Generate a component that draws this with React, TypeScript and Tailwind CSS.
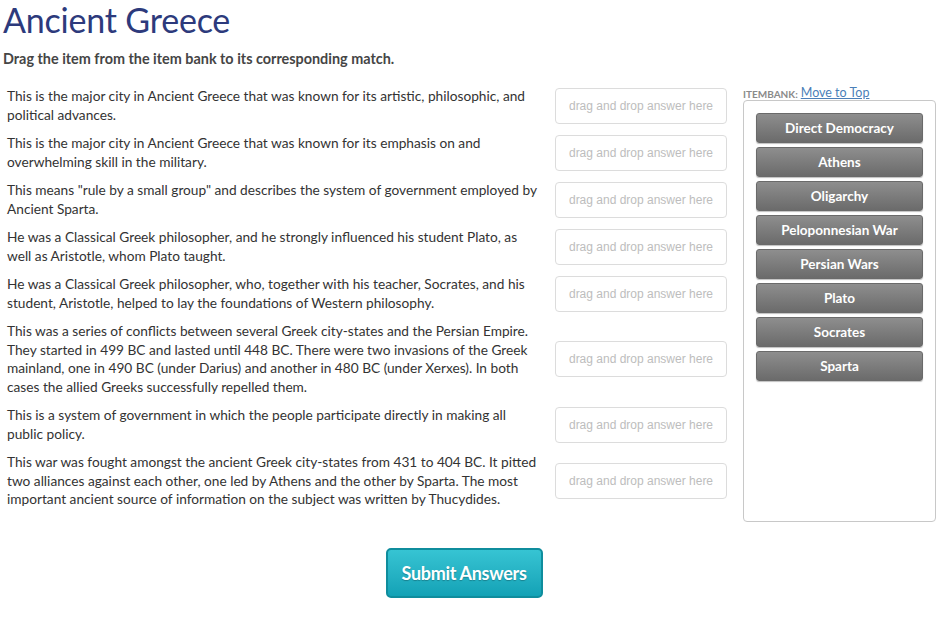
const questions = [
  "This is the major city in Ancient Greece that was known for its artistic, philosophic, and political advances.",
  "This is the major city in Ancient Greece that was known for its emphasis on and overwhelming skill in the military.",
  'This means "rule by a small group" and describes the system of government employed by Ancient Sparta.',
  "He was a Classical Greek philosopher, and he strongly influenced his student Plato, as well as Aristotle, whom Plato taught.",
  "He was a Classical Greek philosopher, who, together with his teacher, Socrates, and his student, Aristotle, helped to lay the foundations of Western philosophy.",
  "This was a series of conflicts between several Greek city-states and the Persian Empire. They started in 499 BC and lasted until 448 BC. There were two invasions of the Greek mainland, one in 490 BC (under Darius) and another in 480 BC (under Xerxes). In both cases the allied Greeks successfully repelled them.",
  "This is a system of government in which the people participate directly in making all public policy.",
  "This war was fought amongst the ancient Greek city-states from 431 to 404 BC. It pitted two alliances against each other, one led by Athens and the other by Sparta. The most important ancient source of information on the subject was written by Thucydides.",
];

const bank = [
  "Direct Democracy",
  "Athens",
  "Oligarchy",
  "Peloponnesian War",
  "Persian Wars",
  "Plato",
  "Socrates",
  "Sparta",
];

export default function App() {
  return (
    <div className="min-h-screen bg-white font-['Lato',sans-serif] text-[#333]">
      <div className="px-[3px]">
        <h1 className="text-[34px] leading-[40px] text-[#2d3a7c] tracking-[-0.2px]">Ancient Greece</h1>
        <p className="mt-[10px] text-[14.4px] leading-[18px] font-bold text-[#454545]">
          Drag the item from the item bank to its corresponding match.
        </p>
      </div>

      <div className="flex pl-[7px] mt-[15px]">
        <div className="grid grid-cols-[548px_172px] gap-y-[10px] items-center pt-[4px] self-start">
          {questions.map((q, idx) => (
            <div className="contents" key={idx}>
              <p className="text-[13.7px] leading-[18.5px] pr-[13px]">{q}</p>
              <div className="h-[36px] border border-[#dcdcdc] rounded-[4px] flex items-center justify-center font-['Liberation_Sans',sans-serif] text-[12px] text-[#bdbdbd]">
                drag and drop answer here
              </div>
            </div>
          ))}
        </div>

        <div className="ml-[16px] w-[193px]">
          <div className="h-[16px] flex items-end gap-[3px] leading-none">
            <span className="text-[10px] font-bold text-[#8a8a8a]">ITEMBANK:</span>
            <a href="#" className="text-[12.5px] text-[#4b7fb8] underline">Move to Top</a>
          </div>
          <div className="mt-[1px] h-[422px] border border-[#c8c8c8] rounded-[4px] px-[12px] pt-[12px] flex flex-col gap-[4px]">
            {bank.map((b) => (
              <div
                key={b}
                className="h-[30px] rounded-[3px] border border-[#6a6a6a] bg-gradient-to-b from-[#8e8e8e] to-[#6b6b6b] flex items-center justify-center text-white font-bold text-[13.5px] shadow-[0_1px_1px_rgba(0,0,0,0.25)]"
              >
                {b}
              </div>
            ))}
          </div>
        </div>
      </div>

      <div className="flex justify-center pr-[19px] mt-[26px]">
        <button className="w-[157px] h-[50px] rounded-[5px] border-2 border-[#0f8d9d] bg-gradient-to-b from-[#36c4d3] to-[#12a2b6] text-white font-bold text-[18px] tracking-[-0.3px] [text-shadow:0_1px_1px_rgba(0,0,0,0.25)]">
          Submit Answers
        </button>
      </div>
    </div>
  );
}
